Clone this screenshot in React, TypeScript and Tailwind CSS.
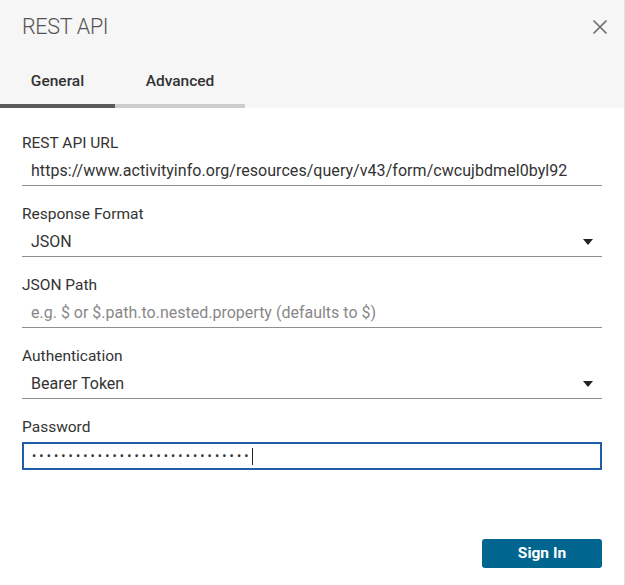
import React from "react";

const Field: React.FC<{ label: string; children: React.ReactNode }> = ({ label, children }) => (
  <div className="flex flex-col">
    <span className="h-[20px] leading-[22px] text-[15.5px] text-[#333]">{label}</span>
    {children}
  </div>
);

const Caret = () => (
  <svg width="10" height="6" viewBox="0 0 10 6" className="mr-[9px]">
    <path d="M0 0 L10 0 L5 6 Z" fill="#222" />
  </svg>
);

export default function App() {
  const dots = "•".repeat(30);
  return (
    <div
      className="w-[625px] h-[585px] bg-white border-r border-[#e2e2e2] flex flex-col"
      style={{ fontFamily: "Roboto, 'Noto Sans', sans-serif" }}
    >
      <header className="h-[108px] bg-[#f6f6f6] flex flex-col">
        <div className="flex items-center justify-between pl-[22px] pr-[16px] pt-[12px] h-[42px]">
          <span className="text-[21.5px] font-light text-[#555] tracking-[-0.3px]">REST API</span>
          <svg width="16" height="16" viewBox="0 0 16 16">
            <path d="M1.5 1.5 L14.5 14.5 M14.5 1.5 L1.5 14.5" stroke="#6b6b6b" strokeWidth="1.6" />
          </svg>
        </div>
        <div className="flex mt-auto">
          <div className="w-[115px] text-center pb-[11px] border-b-4 border-[#5c5c5c] text-[15.5px] font-medium text-[#333]">
            General
          </div>
          <div className="w-[130px] text-center pb-[11px] border-b-4 border-[#cdcdcd] text-[15.5px] font-medium text-[#333]">
            Advanced
          </div>
        </div>
      </header>

      <main className="flex-1 flex flex-col px-[22px] pt-[24px]">
        <div className="flex flex-col gap-[17px]">
          <Field label="REST API URL">
            <div className="mt-[5px] h-[29px] border-b border-[#8f8f8f] flex items-center pl-[9px] text-[16px] tracking-[0.05px] text-[#333]">
              https://www.activityinfo.org/resources/query/v43/form/cwcujbdmel0byl92
            </div>
          </Field>
          <Field label="Response Format">
            <div className="mt-[5px] h-[29px] border-b border-[#8f8f8f] flex items-center justify-between pl-[9px] text-[16px] text-[#333]">
              <span>JSON</span>
              <Caret />
            </div>
          </Field>
          <Field label="JSON Path">
            <div className="mt-[5px] h-[29px] border-b border-[#8f8f8f] flex items-center pl-[9px] text-[16px] text-[#888]">
              e.g. $ or $.path.to.nested.property (defaults to $)
            </div>
          </Field>
          <Field label="Authentication">
            <div className="mt-[5px] h-[29px] border-b border-[#8f8f8f] flex items-center justify-between pl-[9px] text-[16px] text-[#333]">
              <span>Bearer Token</span>
              <Caret />
            </div>
          </Field>
          <Field label="Password">
            <div className="mt-[6px] h-[28px] border-2 border-[#1f5fa6] flex items-center pl-[8px] text-[#333]">
              <span className="text-[12.5px] tracking-[3.1px] leading-none">{dots}</span>
              <span className="w-px h-[17px] bg-[#222]" />
            </div>
          </Field>
        </div>

        <div className="flex justify-end mt-[69px]">
          <button className="w-[120px] h-[29px] rounded-[3px] bg-[#00658f] text-white text-[15.5px] font-bold">
            Sign In
          </button>
        </div>
      </main>
    </div>
  );
}
